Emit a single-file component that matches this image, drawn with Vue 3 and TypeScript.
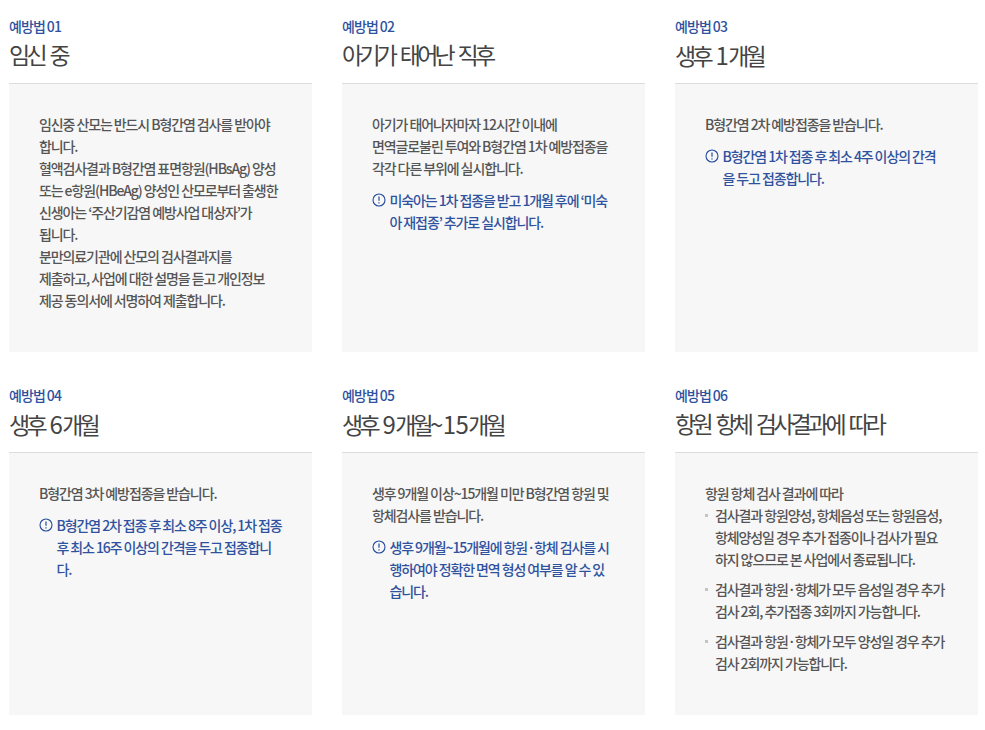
<script setup lang="ts">
interface Card {
  no: string
  title: string
  lines?: string[]
  note?: string[]
  bullets?: string[][]
}
const rows: Card[][] = [
  [
    {
      no: '01', title: '임신 중',
      lines: ['임신중 산모는 반드시 B형간염 검사를 받아야', '합니다.', '혈액검사결과 B형간염 표면항원(HBsAg) 양성', '또는 e항원(HBeAg) 양성인 산모로부터 출생한', '신생아는 ‘주산기감염 예방사업 대상자’가', '됩니다.', '분만의료기관에 산모의 검사결과지를', '제출하고, 사업에 대한 설명을 듣고 개인정보', '제공 동의서에 서명하여 제출합니다.'],
    },
    {
      no: '02', title: '아기가 태어난 직후',
      lines: ['아기가 태어나자마자 12시간 이내에', '면역글로불린 투여와 B형간염 1차 예방접종을', '각각 다른 부위에 실시합니다.'],
      note: ['미숙아는 1차 접종을 받고 1개월 후에 ‘미숙', '아 재접종’ 추가로 실시합니다.'],
    },
    {
      no: '03', title: '생후 1개월',
      lines: ['B형간염 2차 예방접종을 받습니다.'],
      note: ['B형간염 1차 접종 후 최소 4주 이상의 간격', '을 두고 접종합니다.'],
    },
  ],
  [
    {
      no: '04', title: '생후 6개월',
      lines: ['B형간염 3차 예방접종을 받습니다.'],
      note: ['B형간염 2차 접종 후 최소 8주 이상, 1차 접종', '후 최소 16주 이상의 간격을 두고 접종합니', '다.'],
    },
    {
      no: '05', title: '생후 9개월~15개월',
      lines: ['생후 9개월 이상~15개월 미만 B형간염 항원 및', '항체검사를 받습니다.'],
      note: ['생후 9개월~15개월에 항원·항체 검사를 시', '행하여야 정확한 면역 형성 여부를 알 수 있', '습니다.'],
    },
    {
      no: '06', title: '항원 항체 검사결과에 따라',
      lines: ['항원 항체 검사 결과에 따라'],
      bullets: [
        ['검사결과 항원양성, 항체음성 또는 항원음성,', '항체양성일 경우 추가 접종이나 검사가 필요', '하지 않으므로 본 사업에서 종료됩니다.'],
        ['검사결과 항원·항체가 모두 음성일 경우 추가', '검사 2회, 추가접종 3회까지 가능합니다.'],
        ['검사결과 항원·항체가 모두 양성일 경우 추가', '검사 2회까지 가능합니다.'],
      ],
    },
  ],
]
const segs = (t: string): string[] => t.split(/([0-9~]+)/)
</script>

<template>
  <div class="page">
    <div v-for="(row, r) in rows" :key="r" class="row">
      <section v-for="c in row" :key="c.no" class="card">
        <p class="no">예방법 <span class="no-d">{{ c.no }}</span></p>
        <h2 class="title">
          <span v-for="(s, i) in segs(c.title)" :key="i" :class="{ d: i % 2 === 1 }">{{ s }}</span>
        </h2>
        <div class="box">
          <p v-for="l in c.lines" :key="l" class="line">{{ l }}</p>
          <div v-if="c.note" class="note">
            <svg class="ico" width="14" height="14" viewBox="0 0 14 14" fill="none">
              <circle cx="7" cy="7" r="6" stroke="#234a9c" stroke-width="1.1" />
              <path d="M7 3.6v4.2" stroke="#234a9c" stroke-width="1.2" />
              <path d="M7 9.2v1.3" stroke="#234a9c" stroke-width="1.2" />
            </svg>
            <p v-for="l in c.note" :key="l" class="line">{{ l }}</p>
          </div>
          <ul v-if="c.bullets" class="list">
            <li v-for="(b, i) in c.bullets" :key="i">
              <p v-for="l in b" :key="l" class="line">{{ l }}</p>
            </li>
          </ul>
        </div>
      </section>
    </div>
  </div>
</template>

<style>
html, body { margin: 0; background: #fff; }
</style>

<style scoped>
.page {
  width: 985px;
  height: 730px;
  box-sizing: border-box;
  padding: 14px 7px 0 9px;
  font-family: "Noto Sans CJK KR", "Noto Sans", sans-serif;
  display: flex;
  flex-direction: column;
  gap: 31px;
}
.row { display: grid; grid-template-columns: repeat(3, 303px); column-gap: 30px; }
.row:first-child .box { height: 268px; }
.row:last-child .box { height: 262px; }
.card { display: flex; flex-direction: column; }
.no {
  margin: 0;
  font-size: 14px;
  line-height: 24px;
  font-weight: 500;
  letter-spacing: -0.9px;
  word-spacing: -0.5px;
  color: #2f529f;
}
.no-d { letter-spacing: -0.6px; }
.title {
  margin: 0;
  height: 34px;
  font-size: 23px;
  line-height: 33px;
  font-weight: 400;
  letter-spacing: -3.76px;
  word-spacing: 4.2px;
  color: #444;
  padding-bottom: 11px;
  border-bottom: 1px solid #ddd;
  white-space: pre;
}
.d { font-size: 24px; letter-spacing: -0.6px; }
.box {
  box-sizing: border-box;
  background: #f7f7f7;
  padding: 29px 20px 0 30px;
  color: #555;
}
.line {
  margin: 0;
  font-size: 14px;
  line-height: 22px;
  font-weight: 500;
  letter-spacing: -1.1px;
  white-space: nowrap;
}
.note {
  position: relative;
  margin-top: 10px;
  padding-left: 17.5px;
  color: #2f529f;
}
.ico { position: absolute; left: 0; top: 4px; }
.list { margin: 0; padding: 0; list-style: none; }
.list li { position: relative; padding-left: 10px; margin-bottom: 8px; }
.list li::before {
  content: "";
  position: absolute;
  left: 0;
  top: 10px;
  width: 3px;
  height: 3px;
  background: #c4c4c4;
}
</style>
